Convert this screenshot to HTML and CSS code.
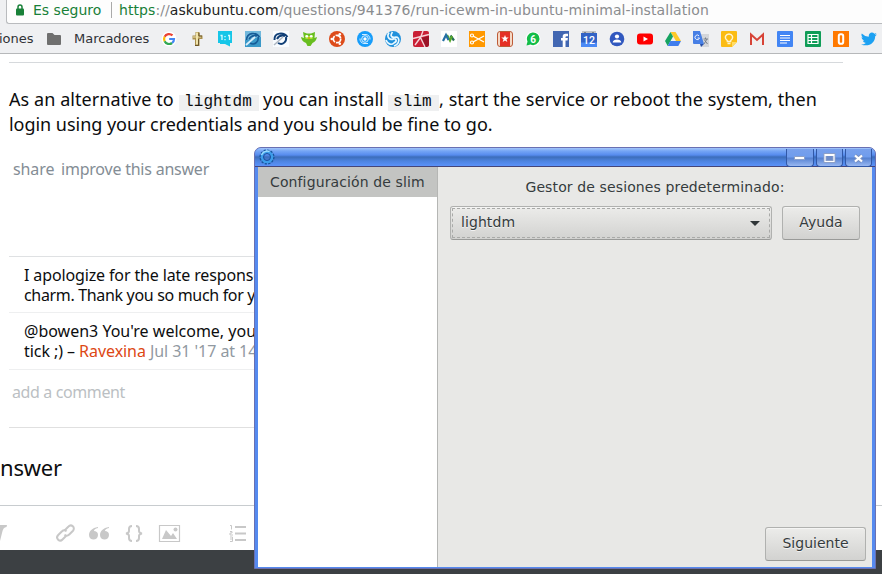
FILE: index.html
```html
<!DOCTYPE html>
<html lang="es">
<head>
<meta charset="utf-8">
<title>Ask Ubuntu</title>
<link rel="stylesheet" href="styles.css">
</head>
<body>
<div class="screen">
<header class="browser">
  <div class="address">
    <svg class="lock" width="8" height="12" viewBox="0 0 8 12"><path d="M2 5V3a2 2 0 0 1 4 0v2" fill="none" stroke="#188038" stroke-width="1.5"/><rect y="4.5" width="8" height="7" rx="1" fill="#188038"/></svg>
    <span class="secure">Es seguro</span>
    <span class="divider"></span>
    <span class="url"><span class="scheme">https</span>://<span class="host">askubuntu.com</span>/questions/941376/run-icewm-in-ubuntu-minimal-installation</span>
  </div>
  <nav class="bookmarks">
    <span class="apps">iones</span>
    <svg class="folder" width="14" height="12" viewBox="0 0 14 12"><path d="M1 0h4.500l2 2H13a1 1 0 0 1 1 1v8a1 1 0 0 1-1 1H1a1 1 0 0 1-1-1V1a1 1 0 0 1 1-1z" fill="#6f6f6f"/></svg>
    <span class="marks">Marcadores</span>
    <div class="icons">
      <svg viewBox="0 0 16 16"><circle cx="8" cy="8" r="7.500" fill="#fff"/><g fill="none" stroke-width="2.200"><path d="M11.500 4.400A5 5 0 0 0 3.600 5.800" stroke="#ea4335"/><path d="M3.600 5.800a5 5 0 0 0 0 4.400" stroke="#fbbc05"/><path d="M3.600 10.200a5 5 0 0 0 7.500 1.800" stroke="#34a853"/><path d="M11.100 12A5 5 0 0 0 13 8H8.200" stroke="#4285f4"/></g></svg>
      <svg viewBox="0 0 16 16"><path d="M6.500 1h4v3.500h3v3.500h-3v7H6V8.500H3.500v-4h3z" fill="#a98f4d"/><path d="M7 1.500h2v12H7zM4 5.500h8v1H4z" fill="#f0e4ac"/><path d="M10 2v3h3M9.500 8v6.500H6" fill="none" stroke="#6b562a"/></svg>
      <svg viewBox="0 0 16 16"><path d="M1 0h14v12h-1.500v4l-4-4H1z" fill="#16c6e8" transform="matrix(-1 0 0 1 16 0)" opacity="0"/><path d="M1 0h14v12h-2v3.500L8 13H3v-1H1z" fill="#16c6e8"/><path d="M3.500 4.500h1.500V9M11 4.500h1.500V9M8 5v1.200M8 8v1.200" fill="none" stroke="#d9fbff" stroke-width="1.300"/></svg>
      <svg viewBox="0 0 16 16"><path d="M0 0h16v16H0z" fill="#72b8dc"/><path d="M0 9l16-3v10H0z" fill="#3a98c8"/><path d="M1.500 9C2 1 11 1 14.500 6M5 12c5 3 9-2 8-6M4 8c2-3 5-4 8-3" fill="none" stroke="#165b97" stroke-width="1.600"/><path d="M1 14L10 6" fill="none" stroke="#d9eefa" stroke-width="1.700"/></svg>
      <svg viewBox="0 0 16 16"><path d="M0 0h16v16H0z" fill="#f9fcff"/><path d="M1.500 9C1 1 11 1 14.500 6M5 12c5 3 9-2 8-6M4 8c2-4 5-4 8-3" fill="none" stroke="#103f77" stroke-width="2"/><path d="M1 14l9-8" fill="none" stroke="#aeb7c1" stroke-width="1.500"/></svg>
      <svg viewBox="0 0 16 16"><path d="M2 1l4 1.500h4L14 1l-.5 6 2.500-1c-.5 3-2 5-4.500 6L9.500 15H6.500L5 12C2 11 .500 9 0 6l3 1z" fill="#68be20"/><path d="M4 4l4 1 4-1-.5 4H4.500z" fill="#a6df31"/><circle cx="5.800" cy="5.300" r="1.300" fill="#fff"/><circle cx="10.200" cy="5.300" r="1.300" fill="#fff"/><path d="M7 6.500h2L8 9z" fill="#e68a00"/></svg>
      <svg viewBox="0 0 16 16"><circle cx="8" cy="8" r="8" fill="#dd4b1a"/><circle cx="8" cy="8" r="3.700" fill="none" stroke="#fff" stroke-width="1.700" stroke-dasharray="6.750 1"/><g fill="#fff"><circle cx="2.800" cy="8" r="1.300"/><circle cx="10.800" cy="3.200" r="1.300"/><circle cx="10.800" cy="12.800" r="1.300"/></g></svg>
      <svg viewBox="0 0 16 16"><circle cx="8" cy="8" r="8" fill="#179dfa"/><circle cx="8" cy="8" r="1.700" fill="#fff"/><g fill="none" stroke="#d5edff" stroke-width="1"><circle cx="8" cy="8" r="3.300"/><path d="M5 3.500h4a4.500 4.500 0 0 1 4 5M11 12.500H7a4.500 4.500 0 0 1-4-5"/></g></svg>
      <svg viewBox="0 0 16 16"><circle cx="8" cy="8" r="8" fill="#2091dc"/><path d="M4 1.500c-3 5 1 8 4.500 6.500 3-1 4 3 0 4M7.500 1C4 6 8 7 11 6c4 0 4 7-2 9M1 9c2 5 6 5 8 3" fill="none" stroke="#e9f8ff" stroke-width="1.700"/></svg>
      <svg viewBox="0 0 16 16"><rect width="16" height="16" rx="2" fill="#c91f35"/><path d="M8 7l8-2v9l-2 2H11z" fill="#9b1327"/><path d="M0 7.500l16-4M10 0L7.500 6.500l4.500 9.500M7.500 6.500L2 14" stroke="#f6d4d9" stroke-width="1.400" fill="none"/></svg>
      <svg viewBox="0 0 16 16"><path d="M0 0h16v16H0z" fill="#fff"/><g fill="none" stroke-width="2.200"><path d="M9.500 4.500l3.500 5" stroke="#246c55"/><path d="M6 4l3 5.500L11 5" stroke="#57a82c"/><path d="M2 10l3-6 2.500 5" stroke="#246fa4"/></g></svg>
      <svg viewBox="0 0 16 16"><path d="M0 0h16v16H0z" fill="#ff9800"/><path d="M4 5l11 6M4 11l11-6" stroke="#fff" stroke-width="1.300"/><g fill="none" stroke="#fff" stroke-width="1.200"><circle cx="3" cy="4.500" r="1.500"/><circle cx="3" cy="11.500" r="1.500"/></g></svg>
      <svg viewBox="0 0 16 16"><rect x=".5" y=".5" width="15" height="15" rx="2.500" fill="#f5d9c6" stroke="#bd5b38"/><path d="M3 1h10v14H3z" fill="#e53025"/><path d="M8 4l1 2.600h2.700L9.500 8.200l.8 2.800L8 9.400 5.700 11l.8-2.800-2.200-1.600H7z" fill="#fff"/></svg>
      <svg viewBox="0 0 16 16"><circle cx="8" cy="8" r="7.500" fill="#fff"/><path d="M1.500 14.500l1-4A6.300 6.300 0 1 1 5.500 13.500z" fill="#13bd48"/><text x="8" y="11.700" class="six">6</text></svg>
      <svg viewBox="0 0 16 16"><path d="M0 0h16v16H0z" fill="#4267b2"/><path d="M9.700 16V9.500H8V7h1.700V5.500Q9.700 2.700 12.500 2.700H15v2.500h-1.500q-1 0-1 1V7h2.400l-.4 2.500h-2V16z" fill="#fff"/></svg>
      <svg viewBox="0 0 16 16"><path d="M1 0h14v3H1z" fill="#c0c2c6"/><path d="M0 2h16v14H0z" fill="#3263c6"/><path d="M0 11.500h16V16H0z" fill="#4a89f5"/><path d="M3 1h2v1H3zM11 1h2v1h-2z" fill="#808589"/><text x="8" y="12.500" class="twelve">12</text></svg>
      <svg viewBox="0 0 16 16"><circle cx="8" cy="8" r="7.300" fill="#3158bf"/><circle cx="8" cy="5.500" r="2.100" fill="#fff"/><path d="M3.700 11.500c0-4 8.600-4 8.600 0z" fill="#fff"/></svg>
      <svg viewBox="0 0 16 16"><rect y="2.500" width="16" height="11" rx="3" fill="#f00"/><path d="M6.500 5.500v5L11 8z" fill="#fff"/></svg>
      <svg viewBox="0 0 16 16"><path d="M5.500 1h5L16 10h-5z" fill="#ffc928"/><path d="M5.500 1L8 5.500 2.700 15 0 10z" fill="#16a361"/><path d="M5.300 10H16l-2.700 5H2.700z" fill="#3f7ded"/></svg>
      <svg viewBox="0 0 16 16"><path d="M6 3h10v13H8z" fill="#d4d6da"/><path d="M0 0h7l4 13H1q-1 0-1-1z" fill="#477fe5"/><path d="M7 13h4l-3 3z" fill="#2951a8"/><path d="M6 4.800A2.300 2.300 0 1 0 6.500 7H4.600" fill="none" stroke="#e8efff"/><path d="M10.500 8H15M12.500 6.500V8M11 13l3-5M11.500 9l3 4" fill="none" stroke="#707984" stroke-width=".9"/></svg>
      <svg viewBox="0 0 16 16"><path d="M1 0h14q1 0 1 1v10l-5 5H1q-1 0-1-1V1q0-1 1-1z" fill="#fbbc14"/><path d="M11 16v-5h5z" fill="#ffdc68"/><path d="M6.300 9.500C2.500 6.500 5 3 8 3s5.500 3.500 1.700 6.500v1H6.300zM6.500 12.500h3" fill="none" stroke="#fff4d0" stroke-width="1.300"/></svg>
      <svg viewBox="0 0 16 16"><path d="M1 2.500h14v11H1z" fill="#f1efef"/><path d="M2 14V3.500L8 9l6-5.500V14" fill="none" stroke="#d74337" stroke-width="2"/></svg>
      <svg viewBox="0 0 16 16"><rect width="16" height="16" rx="1" fill="#4285f4"/><path d="M3 4.500h10M3 7h10M3 9.500h10M3 12h7" stroke="#fff" stroke-width="1.200"/></svg>
      <svg viewBox="0 0 16 16"><rect width="16" height="16" rx="1" fill="#109d58"/><path d="M3 3.500h10v9H3zM3 6.500h10M3 9.500h10M6.500 3v10" fill="none" stroke="#fff" stroke-width="1.200"/></svg>
      <svg viewBox="0 0 16 16"><path d="M0 0h16v16H0z" fill="#ff7900"/><rect x="5.800" y="3.300" width="4.400" height="9.400" rx="1.800" fill="none" stroke="#fff" stroke-width="2"/></svg>
      <svg viewBox="0 0 16 16"><path d="M.8 2.500Q3.500 5.500 7.800 5.700C7.300 1.500 11.500.4 13.400 2.800l2-.7-1.300 1.800 1.900-.4-1.800 1.700C14 12 8 16.300 0 13.500q3 .1 4.800-1.500-2.400-.2-3-2.300h1.400Q.6 8.700.5 6.200l1.500.4Q-.3 4.800.8 2.500z" fill="#1da1f2"/></svg>
    </div>
  </nav>
</header>
<main class="page">
  <section class="answer">
    <p class="first"><span class="t1">As an alternative to</span><code class="c1">lightdm</code><span class="t2">you can install</span><code class="c2">slim</code><span class="t3">, start the service or reboot the system, then</span></p>
    <p class="second">login using your credentials and you should be fine to go.</p>
  </section>
  <div class="actions"><span class="share">share</span><span class="improve">improve this answer</span></div>
  <section class="comments">
    <div class="comment"><p class="k1">I apologize for the late response</p><p class="k2">charm. Thank you so much for your</p></div>
    <div class="comment next"><p class="k3">@bowen3 You're welcome, you</p><p class="k4">tick ;) – <span class="author">Ravexina</span> <span class="date">Jul 31 '17 at 14:</span></p></div>
    <p class="add">add a comment</p>
  </section>
  <h2>nswer</h2>
  <div class="editor">
    <svg width="250" height="24" viewBox="0 0 250 24">
      <path d="M0 5h7l-.5 2Q3 7 2 13L0 21z" fill="#c8c8c8"/>
      <g fill="none" stroke="#c8c8c8" stroke-width="2"><path d="M65 10l3.500-3.500a3 3 0 0 1 4.500 4.200l-4 4a3 3 0 0 1-4.500 0M66 16l-3.500 3.500a3 3 0 0 1-4.500-4.200l4-4a3 3 0 0 1 4.500 0"/><path d="M132 6q-3 0-3 3v2q0 2-3 2.500 3 .5 3 2.500v2q0 3 3 3M136 6q3 0 3 3v2q0 2 3 2.500-3 .5-3 2.500v2q0 3-3 3"/><path d="M159.500 5.500h20v16h-20z" stroke-width="1.200"/><path d="M235 7h11M235 13.500h11M235 20h11"/></g>
      <path d="M98 7c-6 1-9 4-9 8 0 6 9 6 9 0 0-3-2-4-4-4q0-2 4-3zM109 7c-6 1-9 4-9 8 0 6 9 6 9 0 0-3-2-4-4-4q0-2 4-3zM162 19l4-9 5 6 2-3 4 6z" fill="#c8c8c8"/><circle cx="175.500" cy="9.500" r="2" fill="#c8c8c8"/>
      <path d="M230 5.500h1.500v4M230 11.500h2v1.500h-2v2h3M230 17h2.500v4.500H230M230 19h2" fill="none" stroke="#c8c8c8"/>
    </svg>
  </div>
</main>
<footer class="panel"></footer>
<div class="window">
  <div class="titlebar">
    <svg class="gear" width="16" height="17" viewBox="0 0 16 17"><circle cx="8" cy="8" r="6.600" fill="none" stroke="#17569c" stroke-width="2" stroke-dasharray="2.200 1.250"/><circle cx="8" cy="8" r="5" fill="none" stroke="#3c9dea" stroke-width="2.600"/><circle cx="8" cy="8" r="3.500" fill="none" stroke="#174f9d"/><path d="M2.500 6a6 6 0 0 1 8-3.500" fill="none" stroke="#9bddff" stroke-width="1.400"/></svg>
    <div class="controls">
      <span class="control"><svg viewBox="0 0 27 18"><path d="M8.500 7.500h10v3h-10z" fill="#fff" stroke="#8c9fc7"/></svg></span>
      <span class="control"><svg viewBox="0 0 27 18"><path d="M9 5.500h9v7H9z" fill="#6d8cc9" stroke="#8c9fc7" stroke-width="3"/><path d="M9 5.500h9v7H9zM9 6.500h9" fill="none" stroke="#fff" stroke-width="1.200"/></svg></span>
      <span class="control"><svg viewBox="0 0 27 18"><path d="M10 6.500l7 6M17 6.500l-7 6" stroke="#7b91c0" stroke-width="4"/><path d="M10 6.500l7 6M17 6.500l-7 6" stroke="#fff" stroke-width="2.200"/></svg></span>
    </div>
  </div>
  <div class="content">
    <aside><div class="item">Configuración de slim</div></aside>
    <section class="settings">
      <div class="label">Gestor de sesiones predeterminado:</div>
      <div class="row"><div class="button combo"><span>lightdm</span><i></i></div><div class="button help">Ayuda</div></div>
      <div class="button continue">Siguiente</div>
    </section>
  </div>
</div>
</div>
</body>
</html>
```
FILE: styles.css
```css
* { box-sizing: border-box; }
body { margin: 0; background: #fff; }
p, h2 { margin: 0; font-weight: 400; white-space: nowrap; }
.screen { position: relative; width: 882px; height: 574px; overflow: hidden; display: flex; flex-direction: column; font-family: "Noto Sans", sans-serif; color: #0c0d0e; }
.browser { height: 54px; flex: none; background: #eff0f2; border-bottom: 1px solid #b6b8ba; font-family: "DejaVu Sans", sans-serif; }
.address { height: 24px; margin-left: 6px; padding: 0 0 4px 9px; display: flex; align-items: center; background: #fdfdfd; border: solid #b9bbbe; border-width: 0 0 1px 1px; border-radius: 0 0 0 3px; font-size: 14px; white-space: nowrap; }
.lock { flex: none; margin-top: 1px; }
.secure { width: 70px; margin-left: 9px; color: #188038; }
.divider { width: 1px; height: 16px; margin: 0 7px 0 8px; background: #aaa; }
.url { color: #8a8c8f; letter-spacing: .078px; }
.scheme { color: #188038; }
.host { color: #222; }
.bookmarks { height: 29px; display: flex; align-items: center; font-size: 13px; color: #303236; }
.apps { width: 47px; margin-left: -1px; }
.folder { margin-left: 1px; }
.marks { width: 87px; margin-left: 13px; }
.icons { display: flex; gap: 12px; }
.icons svg { width: 16px; height: 16px; flex: none; }
.six { font: bold 10px Roboto, sans-serif; fill: #fff; text-anchor: middle; }
.twelve { font: 500 10.5px Roboto, sans-serif; fill: #fff; text-anchor: middle; }
.page { height: 496px; flex: none; }
.answer { width: 834px; margin: 8px 0 0 9px; padding-top: 24px; border-top: 1px solid #d6d9dc; font-size: 18px; line-height: 25px; }
.first { display: flex; }
.second { letter-spacing: -.035px; }
code { height: 16px; margin-top: 8px; padding-left: 5px; background: #eff0f1; font: 16px/15px "Liberation Mono", monospace; letter-spacing: .1px; }
.t1 { width: 170px; letter-spacing: .07px; }
.c1 { width: 80px; }
.t2 { width: 129px; padding-left: 4px; }
.c2 { width: 51px; }
.t3 { letter-spacing: .08px; }
.actions { height: 24px; margin: 20px 0 0 13px; display: flex; font-size: 16px; line-height: 24px; color: #848d95; white-space: nowrap; }
.share { width: 48px; letter-spacing: -.1px; }
.improve { letter-spacing: -.22px; }
.comments { width: 834px; margin: 75px 0 0 9px; border-top: 1px solid #dfe1e3; font-size: 16px; line-height: 20px; }
.comment { height: 56px; padding: 8px 0 0 15px; border-bottom: 1px solid #eeeff0; }
.next { height: 57px; }
.k1 { letter-spacing: -.13px; }
.k2 { letter-spacing: -.33px; }
.k4 { letter-spacing: -.06px; }
.author { color: #dd4814; }
.date { color: #9199a1; }
.add { height: 58px; padding: 12px 0 0 3px; color: #bbbfc3; border-bottom: 1px solid #e0e0e0; letter-spacing: -.38px; }
h2 { height: 77px; padding-top: 23px; font-size: 22px; line-height: 32px; letter-spacing: -.2px; }
.editor { height: 45px; padding-top: 14px; border-top: 1px solid #c8cccf; }
.panel { height: 24px; background: #3c4043; }
.window { position: absolute; left: 254px; top: 147px; width: 622px; height: 422px; display: flex; flex-direction: column; border: 1px solid #6970b2; border-radius: 7px 7px 0 0; background: #558aef; overflow: hidden; font: 14px "DejaVu Sans", sans-serif; color: #353b3d; }
.titlebar { height: 19px; flex: none; display: flex; align-items: flex-start; justify-content: space-between; padding: 1px 3px 0 4px; background: linear-gradient(#a3c5fa 0, #75a5f5 3px, #568bee 7px, #3c6dba 9px, #4d83df 13px, #5a92fa 18px, #454578 18px); }
.controls { display: flex; gap: 2px; }
.control { width: 27px; height: 18px; border: solid #3158a7; border-width: 0 1px 1px; border-radius: 0 0 4px 4px; background: linear-gradient(#78a0ec, #6f9ced 8px, #5480d0 9px, #98b8f2); }
.control:first-child { width: 28px; }
.control svg { display: block; width: 27px; height: 18px; margin-left: -1px; }
.content { height: 400px; margin: 0 3px; display: flex; }
aside { width: 180px; flex: none; background: #fff; border-right: 1px solid #b5b6b4; }
.item { height: 30px; padding-left: 12px; line-height: 30px; background: #c3c4c2; white-space: nowrap; letter-spacing: .12px; }
.settings { width: 434px; flex: none; padding: 0 12px 6px; background: #e8e8e6; display: flex; flex-direction: column; }
.label { height: 39px; padding-top: 1px; line-height: 39px; text-align: center; letter-spacing: .12px; }
.row { display: flex; gap: 10px; }
.button { height: 34px; border: 1px solid #b0b1af; border-bottom-color: #999a98; border-radius: 3px; background: linear-gradient(#ececea, #d2d2d0); box-shadow: inset 0 1px #f5f5f4; text-align: center; line-height: 31px; text-shadow: 0 1px #f3f3f3; }
.combo { width: 322px; padding: 0 11px 0 10px; display: flex; justify-content: space-between; align-items: flex-start; outline: 1px dashed #a9aaa8; outline-offset: -3px; letter-spacing: .08px; }
.combo i { width: 0; height: 0; margin-top: 14px; border: 5px solid transparent; border-top-color: #303638; border-bottom: 0; }
.help { width: 78px; }
.continue { width: 101px; margin: auto -6px 0 auto; }
```
